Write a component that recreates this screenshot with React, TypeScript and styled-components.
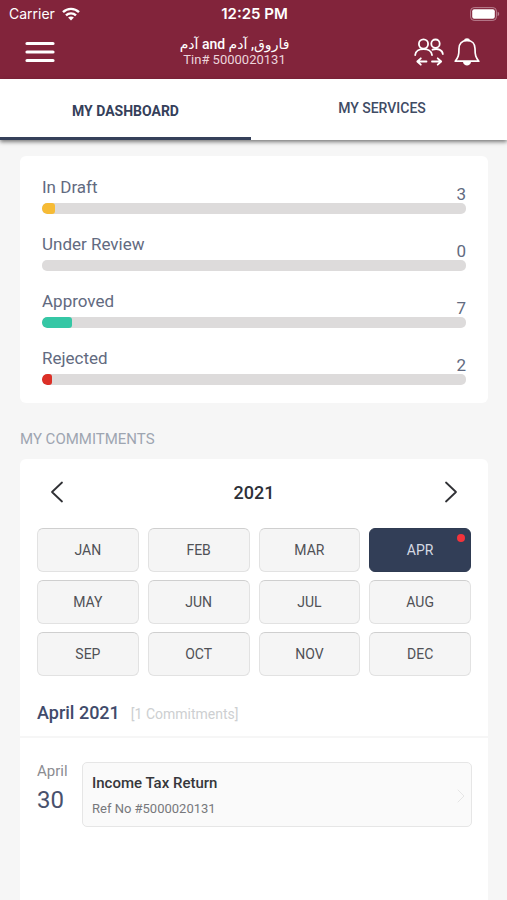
import React from "react";
import styled, { createGlobalStyle, css } from "styled-components";

const GlobalStyle = createGlobalStyle`
  * { box-sizing: border-box; }
  html, body, #root { height: 100%; }
  body {
    margin: 0;
    background: #f6f6f6;
    font-family: Roboto, "Noto Sans", "DejaVu Sans", sans-serif;
    color: #333a48;
  }
  button {
    font: inherit;
    color: inherit;
    border: 0;
    padding: 0;
    background: none;
    cursor: pointer;
  }
  svg { display: block; }
  h1, h2, h3, p { margin: 0; font-weight: 400; }
`;

const Screen = styled.div`
  min-height: 100%;
  display: flex;
  flex-direction: column;
`;

const Header = styled.header`
  background: #82243b;
  color: #fff;
`;

const StatusBar = styled.div`
  display: grid;
  grid-template-columns: 1fr auto 1fr;
  align-items: center;
  height: 27px;
  padding: 0 7px 0 9px;
  font-family: Inter, Roboto, sans-serif;
  font-size: 14px;
`;

const Carrier = styled.div`
  display: flex;
  align-items: center;
  gap: 7px;
`;

const Clock = styled.time`
  font-size: 15px;
  font-weight: 600;
`;

const Battery = styled.div`
  justify-self: end;
`;

const TitleBar = styled.div`
  display: grid;
  grid-template-columns: 56px 1fr 104px;
  align-items: center;
  height: 52px;
  padding: 0 14px 2px 24px;
`;

const TitleText = styled.div`
  text-align: center;
`;

const UserName = styled.h1`
  font-size: 14px;
  line-height: 16px;
  font-weight: 500;
`;

const Tin = styled.p`
  font-size: 13px;
  line-height: 16px;
  color: #ecd5db;
`;

const IconButton = styled.button`
  display: flex;
`;

const Actions = styled.div`
  display: flex;
  justify-content: flex-end;
  gap: 10px;
  padding-right: 13px;
`;

const Tabs = styled.nav`
  display: grid;
  grid-template-columns: 99fr 101fr;
  height: 61px;
  background: #fff;
  box-shadow: 0 2px 4px rgba(0, 0, 0, 0.5);
  position: relative;
`;

const Tab = styled.button<{ $active?: boolean }>`
  font-size: 14px;
  font-weight: 500;
  color: #404b64;
  padding-bottom: 3px;
  padding-left: 6px;
  ${(p) =>
    p.$active &&
    css`
      font-weight: 700;
      color: #35405a;
      padding-left: 0;
      padding-top: 5px;
      padding-bottom: 0;
      border-bottom: 3px solid #35405a;
    `}
`;

const Content = styled.main`
  flex: 1;
  display: flex;
  flex-direction: column;
  padding: 16px 19px 0 20px;
`;

const Card = styled.section`
  background: #fff;
  border-radius: 6px;
`;

const StatusCard = styled(Card)`
  display: flex;
  flex-direction: column;
  gap: 18px;
  padding: 19px 22px 18px;
`;

const StatusRow = styled.div`
  display: flex;
  flex-direction: column;
`;

const StatusHead = styled.div`
  display: flex;
  justify-content: space-between;
  height: 28px;
  font-size: 17px;
  line-height: 24px;
  color: #626a80;
`;

const StatusCount = styled.span`
  align-self: flex-end;
  line-height: 18px;
`;

const Track = styled.div`
  height: 11px;
  border-radius: 5px;
  background: #dddbdb;
  overflow: hidden;
`;

const Fill = styled.div<{ $color: string }>`
  height: 100%;
  border-radius: 5px 3px 3px 5px;
  background: ${(p) => p.$color};
`;

const SectionTitle = styled.h2`
  padding: 24px 0 8px;
  font-size: 15px;
  line-height: 24px;
  color: #9ea5b1;
`;

const CommitmentCard = styled(Card)`
  flex: 1;
  border-radius: 6px 6px 0 0;
`;

const YearBar = styled.div`
  display: flex;
  align-items: center;
  justify-content: space-between;
  height: 66px;
  padding: 0 30px;
`;

const Year = styled.h3`
  font-size: 18px;
  font-weight: 500;
  color: #2d3038;
`;

const Months = styled.div`
  display: grid;
  grid-template-columns: repeat(4, 1fr);
  gap: 8px 9px;
  padding: 3px 17px 0;
`;

const Month = styled.button<{ $selected?: boolean }>`
  position: relative;
  height: 44px;
  border: 1px solid #e2e2e2;
  border-top-color: #cfcfcf;
  border-radius: 6px;
  background: #f5f5f5;
  font-size: 14px;
  color: #505155;
  ${(p) =>
    p.$selected &&
    css`
      border-color: #2f3b52;
      background: #323e57;
      color: #d5d9e2;
    `}
`;

const Dot = styled.span`
  position: absolute;
  top: 5px;
  right: 5px;
  width: 8px;
  height: 8px;
  border-radius: 50%;
  background: #f4333b;
`;

const MonthHeading = styled.div`
  display: flex;
  align-items: baseline;
  gap: 11px;
  height: 62px;
  padding: 25px 17px 0;
  border-bottom: 2px solid #f6f6f6;
`;

const MonthName = styled.h3`
  font-size: 18px;
  line-height: 24px;
  font-weight: 500;
  color: #414b6b;
`;

const MonthCount = styled.span`
  font-size: 14px;
  color: #cdcfd1;
`;

const Entry = styled.div`
  display: grid;
  grid-template-columns: 45px 1fr;
  padding: 24px 16px 0 17px;
`;

const DateLabel = styled.div`
  font-size: 15px;
  line-height: 18px;
  color: #8b8c91;
`;

const Day = styled.div`
  font-size: 24px;
  line-height: 40px;
  color: #49516d;
`;

const EntryCard = styled.button`
  display: flex;
  align-items: center;
  justify-content: space-between;
  height: 65px;
  padding: 2px 6px 0 9px;
  border: 1px solid #e6e6e6;
  border-radius: 5px;
  background: #fafafa;
  text-align: left;
`;

const EntryTitle = styled.div`
  font-size: 15px;
  line-height: 26px;
  font-weight: 500;
  color: #36373b;
`;

const EntryRef = styled.div`
  font-size: 13px;
  line-height: 26px;
  color: #77787c;
`;

const WifiIcon = () => (
  <svg width="18" height="14" viewBox="0 0 18 14" fill="none" stroke="#fff" strokeWidth="2.4" aria-hidden="true">
    <path d="M1 5.2C5.5.8 12.5.8 17 5.2" />
    <path d="M4 8.4C6.8 5.7 11.2 5.7 14 8.4" />
    <path d="M9 13.5 6.1 10.6C7.7 9.1 10.3 9.1 11.9 10.6Z" fill="#fff" stroke="none" />
  </svg>
);

const BatteryIcon = () => (
  <svg width="30" height="14" viewBox="0 0 30 14" fill="none" role="img" aria-label="Battery full">
    <rect x=".6" y=".6" width="25.8" height="12.8" rx="3.5" stroke="#b98090" />
    <rect x="2.2" y="2.2" width="22.6" height="9.6" rx="2" fill="#fff" />
    <path d="M27.6 4.8C29.7 5.3 29.7 8.7 27.6 9.2Z" fill="#b98090" />
  </svg>
);

const MenuIcon = () => (
  <svg width="32" height="22" viewBox="0 0 32 22" stroke="#fff" strokeWidth="3.2" strokeLinecap="round" aria-hidden="true">
    <path d="M3 2.5H29M3 11H29M3 19.5H29" />
  </svg>
);

const SwitchUserIcon = () => (
  <svg width="30" height="28" viewBox="0 0 30 28" fill="none" stroke="#fff" strokeWidth="1.8" strokeLinecap="round" strokeLinejoin="round" aria-hidden="true">
    <circle cx="9.5" cy="6" r="4.6" />
    <circle cx="21.5" cy="5.7" r="4.2" />
    <path d="M1.2 17C1.5 9 17.5 9 18 17" />
    <path d="M18.5 11.7C23.5 9.8 28.500 12 28.8 16" />
    <path d="M12.5 23.5H3.5M6.8 20.3 3.3 23.5 6.8 26.7" />
    <path d="M18 23.5H27M23.7 20.3 27.2 23.5 23.7 26.7" />
  </svg>
);

const BellIcon = () => (
  <svg width="26" height="28" viewBox="0 0 26 28" fill="none" stroke="#fff" strokeWidth="1.7" strokeLinejoin="round" aria-hidden="true">
    <path d="M13 2.4C7.8 2.4 5 6 5 10.500C5 17.5 4.2 19.5 1.2 23.2H24.8C21.8 19.5 21 17.5 21 10.5C21 6 18.2 2.4 13 2.4Z" />
    <path d="M10.8 2.4C11 .6 15 .6 15.2 2.4Z" fill="#fff" />
    <path d="M9 24C9.5 28.500 16.500 28.500 17 24Z" fill="#fff" stroke="none" />
  </svg>
);

const Chevron = ({ direction }: { direction: "left" | "right" }) => (
  <svg width="14" height="22" viewBox="0 0 14 22" fill="none" stroke="#303135" strokeWidth="1.8" strokeLinecap="round" strokeLinejoin="round" aria-hidden="true">
    <path d={direction === "left" ? "M12 1.5 2 11 12 20.5" : "M2 1.5 12 11 2 20.5"} />
  </svg>
);

const SmallChevron = () => (
  <svg width="8" height="14" viewBox="0 0 8 14" fill="none" stroke="#e6e6e6" strokeLinecap="round" aria-hidden="true">
    <path d="M1 1 7 7 1 13" />
  </svg>
);

const statuses = [
  { label: "In Draft", count: 3, share: 3, color: "#f6bb35" },
  { label: "Under Review", count: 0, share: 0, color: "#9aa0ae" },
  { label: "Approved", count: 7, share: 7, color: "#35c7a5" },
  { label: "Rejected", count: 2, share: 2.4, color: "#dc3027" },
];

const months = ["JAN", "FEB", "MAR", "APR", "MAY", "JUN", "JUL", "AUG", "SEP", "OCT", "NOV", "DEC"];

export default function App() {
  return (
    <Screen>
      <GlobalStyle />
      <Header>
        <StatusBar>
          <Carrier>
            Carrier <WifiIcon />
          </Carrier>
          <Clock>12:25 PM</Clock>
          <Battery>
            <BatteryIcon />
          </Battery>
        </StatusBar>
        <TitleBar>
          <IconButton aria-label="Menu">
            <MenuIcon />
          </IconButton>
          <TitleText>
            <UserName>آدم and فاروق, آدم</UserName>
            <Tin>Tin# 5000020131</Tin>
          </TitleText>
          <Actions>
            <IconButton aria-label="Switch user">
              <SwitchUserIcon />
            </IconButton>
            <IconButton aria-label="Notifications">
              <BellIcon />
            </IconButton>
          </Actions>
        </TitleBar>
      </Header>
      <Tabs>
        <Tab $active aria-current="page">
          MY DASHBOARD
        </Tab>
        <Tab>MY SERVICES</Tab>
      </Tabs>
      <Content>
        <StatusCard>
          {statuses.map((s) => (
            <StatusRow key={s.label}>
              <StatusHead>
                <span>{s.label}</span>
                <StatusCount>{s.count}</StatusCount>
              </StatusHead>
              <Track>
                <Fill $color={s.color} style={{ width: `${s.share}%` }} />
              </Track>
            </StatusRow>
          ))}
        </StatusCard>
        <SectionTitle>MY COMMITMENTS</SectionTitle>
        <CommitmentCard>
          <YearBar>
            <IconButton aria-label="Previous year">
              <Chevron direction="left" />
            </IconButton>
            <Year>2021</Year>
            <IconButton aria-label="Next year">
              <Chevron direction="right" />
            </IconButton>
          </YearBar>
          <Months>
            {months.map((m) => (
              <Month key={m} $selected={m === "APR"} aria-pressed={m === "APR"}>
                {m}
                {m === "APR" && <Dot />}
              </Month>
            ))}
          </Months>
          <MonthHeading>
            <MonthName>April 2021</MonthName>
            <MonthCount>[1 Commitments]</MonthCount>
          </MonthHeading>
          <Entry>
            <div>
              <DateLabel>April</DateLabel>
              <Day>30</Day>
            </div>
            <EntryCard>
              <div>
                <EntryTitle>Income Tax Return</EntryTitle>
                <EntryRef>Ref No #5000020131</EntryRef>
              </div>
              <SmallChevron />
            </EntryCard>
          </Entry>
        </CommitmentCard>
      </Content>
    </Screen>
  );
}
